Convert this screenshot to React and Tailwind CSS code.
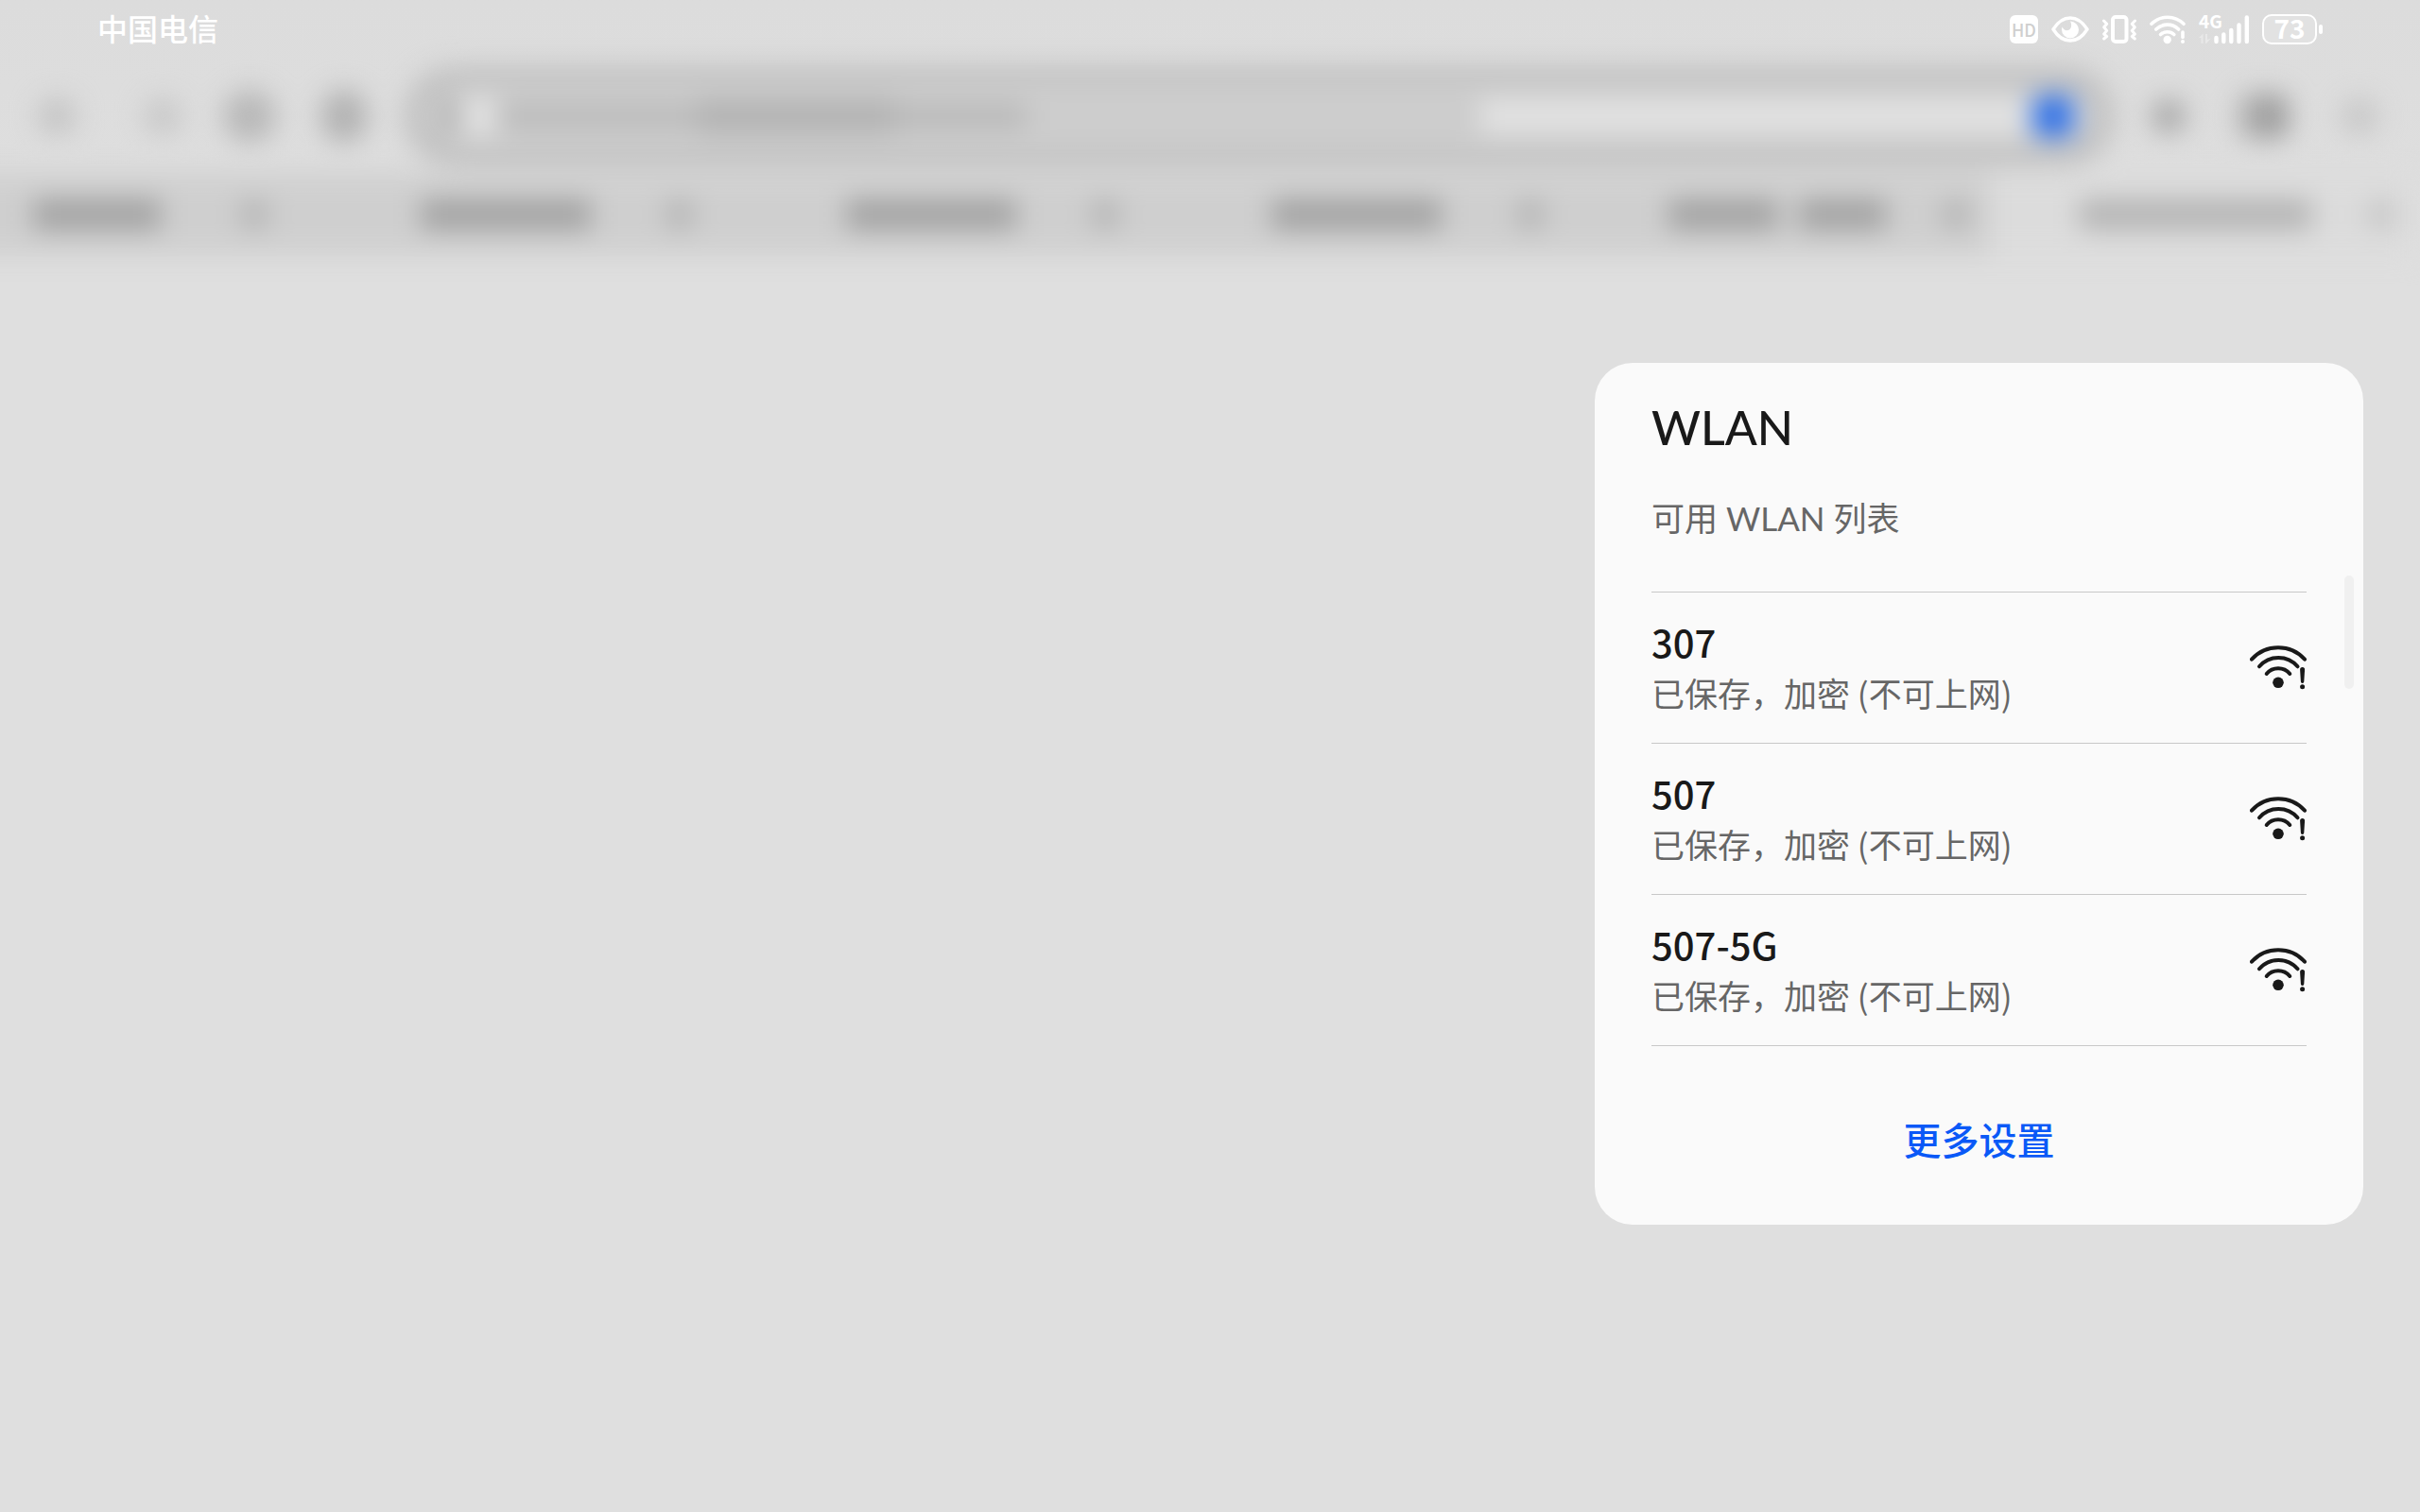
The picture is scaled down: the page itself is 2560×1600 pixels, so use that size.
const networks = [
  { ssid: "307", status: "已保存，加密 (不可上网)" },
  { ssid: "507", status: "已保存，加密 (不可上网)" },
  { ssid: "507-5G", status: "已保存，加密 (不可上网)" },
];

// Each tab lists its label blocks (inset from the tab's left edge, block widths)
const tabs = [
  { id: 1, label: "pl-[180px] w-[315px]", blocks: ["w-full"] },
  { id: 2, label: "pl-[140px] w-[320px]", blocks: ["w-full"] },
  { id: 3, label: "pl-[140px] w-[320px]", blocks: ["w-full"] },
  { id: 4, label: "pl-[140px] w-[320px]", blocks: ["w-full"] },
  { id: 5, label: "pl-[110px] w-[340px]", blocks: ["w-[116px]", "w-[92px]"] },
];

function WifiAlertIcon() {
  return (
    <svg viewBox="0 0 60 48" className="h-12 w-[60px] shrink-0" fill="none" stroke="#191919" strokeWidth="4" strokeLinecap="round" aria-hidden="true">
      <path d="M2 15.7A37.8 37.8 0 0 1 58 15.7" />
      <path d="M10 23.3A26.7 26.7 0 0 1 50.5 23.3" />
      <path d="M17.7 31A16 16 0 0 1 42.3 31" />
      <circle cx="30" cy="40.3" r="5.8" fill="#191919" stroke="none" />
      <path d="M53.1 26.6a2.5 2.5 0 0 1 5 0l-.8 12.6a1.7 1.7 0 0 1-3.4 0z" fill="#191919" stroke="none" />
      <circle cx="55.6" cy="44.8" r="2.5" fill="#191919" stroke="none" />
    </svg>
  );
}

function EyeIcon() {
  return (
    <svg viewBox="0 0 40 28" className="h-7 w-10" aria-hidden="true">
      <path d="M2 14C7 6 13 2 20 2s13 4 18 12c-5 8-11 12-18 12S7 22 2 14z" fill="none" stroke="#fff" strokeWidth="3.4" strokeLinejoin="round" />
      <path d="M20 5.5a9 9 0 1 1-9 9c0-1 .2-2 .5-3 1.2 2.6 3.4 4 5.8 3.6 3.6-.6 5-5.4 2.7-9.6z" fill="#fff" />
    </svg>
  );
}

function VibrateIcon() {
  return (
    <svg viewBox="0 0 36 30" className="h-[30px] w-9" fill="none" stroke="#fff" strokeLinecap="round" strokeLinejoin="round" aria-hidden="true">
      <rect x="11" y="2" width="14.5" height="26" rx="3" strokeWidth="4" />
      <path d="M1.5 6l3.2 3.2-3 3.6 3 3.6-3 3.6 3 2.6-3 2.4" strokeWidth="3" />
      <path d="M34.5 6l-3.2 3.2 3 3.6-3 3.6 3 3.6-3 2.6 3 2.4" strokeWidth="3" />
    </svg>
  );
}

function StatusWifiIcon() {
  return (
    <svg viewBox="0 0 38 32" className="h-8 w-[38px]" fill="none" stroke="#fff" strokeWidth="3.6" strokeLinecap="round" aria-hidden="true">
      <path d="M2 10.3A24 24 0 0 1 36 10.3" />
      <path d="M6.8 16A17 17 0 0 1 30.6 16" />
      <path d="M11.6 21.5A10.5 10.5 0 0 1 25.8 21.5" />
      <circle cx="18.7" cy="27" r="4.2" fill="#fff" stroke="none" />
      <path d="M35 19v5.5" />
      <circle cx="35" cy="29" r="2" fill="#fff" stroke="none" />
    </svg>
  );
}

function SignalIcon() {
  return (
    <span className="relative block h-8 w-[53px]">
      <span className="absolute -top-0.5 left-0 text-[19px] leading-[18px] font-bold">4G</span>
      <svg viewBox="0 0 53 32" className="h-8 w-[53px]" aria-hidden="true">
        <path d="M0 25l4.5-4.5V31h-2v-6zM7 21h2v6l4-1.5L8 31H7z" fill="#fff" fillOpacity=".35" />
        <path d="M18.5 25v4M26.3 21.5v7.5M34.3 17v12M42.5 11.5v17.500M50.8 3.5v25.5" stroke="#fff" strokeWidth="4.4" strokeLinecap="round" />
      </svg>
    </span>
  );
}

function StatusBar() {
  return (
    <div className="flex h-[62px] items-center justify-between px-[103px] text-white">
      <span className="pb-1 text-[32px] leading-9 font-medium">中国电信</span>
      <div className="flex items-center gap-[14px]">
        <span className="flex h-[30px] w-[30px] items-center justify-center rounded-[6px] bg-white text-[18px] leading-none font-medium text-[#cfcfcf]">
          HD
        </span>
        <EyeIcon />
        <VibrateIcon />
        <StatusWifiIcon />
        <SignalIcon />
        <div className="flex items-center gap-0.5">
          <span className="flex h-8 w-[58px] items-center justify-center rounded-[10px] border-2 border-white bg-[#e2e2e2] pb-1 text-[28px] leading-none font-bold">
            73
          </span>
          <span className="h-[10px] w-1 rounded-full bg-white" />
        </div>
      </div>
    </div>
  );
}

// Browser chrome behind the panel, softened by the system overlay
function BrowserBackdrop() {
  return (
    <div className="-mx-10 blur-[14px]" aria-hidden="true">
      <div className="flex h-[122px] items-center pr-[84px] pl-[80px]">
        <div className="flex items-center">
          <span className="h-10 w-10 rounded-full bg-[#c4c4c4]" />
          <span className="ml-[72px] h-10 w-10 rounded-full bg-[#c8c8c8]" />
          <span className="ml-11 h-14 w-14 rounded-full bg-[#b8b8b8]" />
          <span className="ml-12 h-14 w-12 rounded-full bg-[#b2b2b2]" />
        </div>
        <div className="ml-10 flex h-[104px] flex-1 items-center rounded-full border-[26px] border-[#c0c0c0] bg-[#e0e0e0] pr-4 pl-3">
          <span className="h-9 w-5 rounded bg-[#a9a9a9]" />
          <span className="ml-10 h-8 w-[210px] rounded-lg bg-[#b9b9b9]" />
          <span className="h-9 w-[210px] bg-[#b0b0b0]" />
          <span className="h-8 w-[140px] bg-[#b7b7b7]" />
          <span className="h-9 w-[480px] rounded-lg bg-[#cacaca]" />
          <span className="ml-auto h-11 w-11 shrink-0 rounded-lg bg-[#2f70e6]" />
        </div>
        <div className="ml-10 flex items-center gap-[56px]">
          <span className="h-9 w-9 rounded-full bg-[#a6a6a6]" />
          <span className="h-12 w-[52px] rounded-xl bg-linear-to-r from-[#b4b4b4] to-[#929292]" />
          <span className="h-10 w-10 rounded-full bg-[#c8c8c8]" />
        </div>
      </div>
      <div className="flex h-[86px] justify-end overflow-hidden pr-[45px]">
        {tabs.map((tab) => (
          <div key={tab.id} className="flex w-[450px] shrink-0 items-center bg-[#cfcfcf]">
            <div className={`flex h-8 justify-between ${tab.label}`}>
              {tab.blocks.map((width) => (
                <span key={width} className={`bg-[#a2a2a2] ${width}`} />
              ))}
            </div>
            <span className="mr-[20px] ml-auto h-8 w-8 rounded-full bg-[#b4b4b4]" />
          </div>
        ))}
        <div className="flex w-[450px] shrink-0 items-center bg-[#dcdcdc] pl-[95px]">
          <span className="h-8 w-[245px] bg-[#b4b4b4]" />
          <span className="mr-[20px] ml-auto h-8 w-8 rounded-full bg-[#c6c6c6]" />
        </div>
      </div>
    </div>
  );
}

function NetworkRow({ network }) {
  return (
    <li className="border-b border-[#c8c8c8]">
      <button type="button" className="flex h-[159px] w-full items-center justify-between pb-0.5 text-left">
        <span className="flex flex-col">
          <span className="text-[40px] leading-[54px] font-medium text-[#191919]">{network.ssid}</span>
          <span className="text-[35px] leading-[54px] text-[#666666]">{network.status}</span>
        </span>
        <WifiAlertIcon />
      </button>
    </li>
  );
}

export default function App() {
  return (
    <div className="min-h-screen overflow-hidden bg-[#dfdfdf] font-['Noto_Sans_CJK_SC',sans-serif]">
      <header className="bg-linear-to-b from-[#dcdcdc] to-[#dfdfdf]">
        <StatusBar />
        <BrowserBackdrop />
      </header>

      <main className="flex justify-end px-[60px] pt-[114px] pb-10">
        <section className="relative w-full max-w-[813px] rounded-[40px] bg-[#fafafa] px-[60px] pt-8" aria-labelledby="wlan-title">
          <h1 id="wlan-title" className="font-[Lato,sans-serif] text-[50px] leading-[72px] font-medium text-[#191919]">
            WLAN
          </h1>
          <h2 className="h-[139px] border-b border-[#c8c8c8] pt-[34px] font-[Lato,'Noto_Sans_CJK_SC',sans-serif] text-[35px] leading-[52px] text-[#666666]">
            可用 WLAN 列表
          </h2>
          <ul>
            {networks.map((network) => (
              <NetworkRow key={network.ssid} network={network} />
            ))}
          </ul>
          <div className="flex h-[189px] items-center justify-center pt-1.5">
            <button type="button" className="text-[40px] leading-[56px] font-medium text-[#0a59f7]">
              更多设置
            </button>
          </div>
          <span className="absolute top-[225px] right-[10px] h-[120px] w-[10px] rounded-full bg-[#f0f0f0]" />
        </section>
      </main>
    </div>
  );
}
